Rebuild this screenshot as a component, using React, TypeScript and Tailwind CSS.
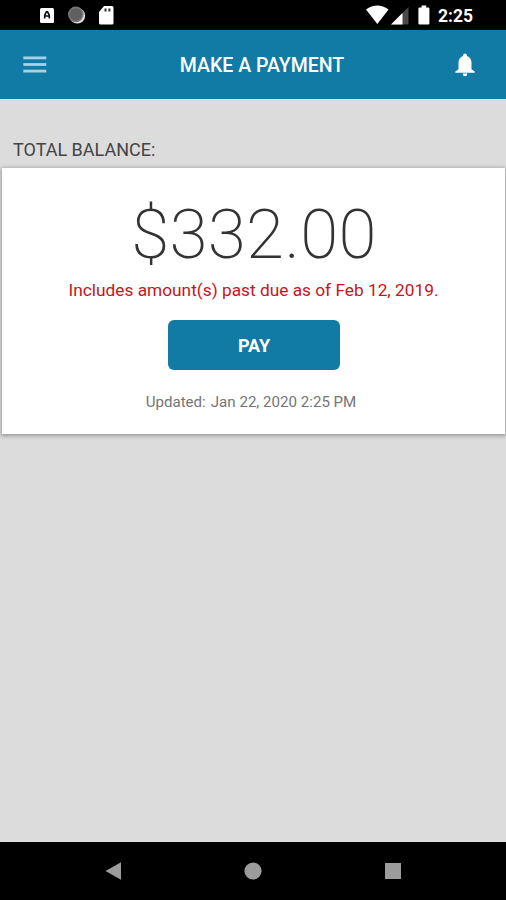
import type { ReactNode } from "react";

const payment = {
  total: "$332.00",
  pastDue: "Includes amount(s) past due as of Feb 12, 2019.",
  updated: "Jan 22, 2020 2:25 PM",
};

function StatusBar() {
  return (
    <div className="flex h-[30px] shrink-0 items-center bg-black text-white">
      <svg width="130" height="30" viewBox="0 0 130 30">
        <rect x="40" y="8" width="14" height="15" rx="1.5" fill="#fff" />
        <path d="M44.7 18.5v-3.2l1.7-3.4h1.2l1.7 3.4v3.2M45.5 16h3" fill="none" stroke="#111" strokeWidth="1.6" />
        <circle cx="77.3" cy="15.8" r="7.8" fill="#e4e4e4" />
        <circle cx="75.8" cy="14.4" r="7.8" fill="#777" />
        <circle cx="75.8" cy="14.4" r="6.2" fill="#606060" />
        <path d="M104 6h8a1.5 1.5 0 0 1 1.5 1.5V23a1.5 1.5 0 0 1-1.5 1.5h-11.5a1.5 1.5 0 0 1-1.5-1.5V12z" fill="#fff" />
        <path d="M104.5 8.5h2v3h-2zM108.4 8.5h2v3h-2z" fill="#333" />
      </svg>
      <svg className="ml-auto" width="70" height="30" viewBox="0 0 70 30">
        <path d="M0 9.5Q11.3 1.5 22.6 9.5L11.3 24z" fill="#fff" />
        <path d="M42.5 7v17.5H25z" fill="#4a4a4a" />
        <path d="M36.5 13v11.5H25z" fill="#fff" />
        <path d="M55.6 5.5h4.6v2h2a1.2 1.2 0 0 1 1.2 1.2v14.6a1.2 1.2 0 0 1-1.2 1.2h-8.6a1.2 1.2 0 0 1-1.2-1.2V8.7a1.2 1.2 0 0 1 1.2-1.2h2z" fill="#fff" />
      </svg>
      <span className="mr-[32px] w-[38px] pt-[3px] pl-[2px] text-[17.5px] leading-none font-bold whitespace-nowrap">2:25</span>
    </div>
  );
}

function IconButton({ label, children }: { label: string; children: ReactNode }) {
  return (
    <button type="button" aria-label={label} className="flex h-full w-[24px] items-center justify-center">
      {children}
    </button>
  );
}

function Header() {
  return (
    <header className="flex h-[69px] shrink-0 items-center justify-between bg-[#117aa5] pr-[29px] pl-[23px] text-white">
      <IconButton label="Menu">
        <svg width="24" height="20" viewBox="0 0 24 20" fill="#a9d2e4">
          <rect x="0.3" y="1.5" width="23" height="2.8" />
          <rect x="0.3" y="8.1" width="23" height="2.8" />
          <rect x="0.3" y="14.7" width="23" height="2.8" />
        </svg>
      </IconButton>
      <h1 className="pt-[3px] pl-[24px] text-[19.5px] leading-none font-medium">MAKE A PAYMENT</h1>
      <IconButton label="Notifications">
        <svg width="24" height="26" viewBox="0 0 24 26" fill="#fff">
          <path d="M12 1.5a1.9 1.9 0 0 1 1.9 1.9v.6c3 .9 4.6 3.5 4.6 6.8v6.4l3.2 2.3v1.2H2.3v-1.2l3.2-2.3v-6.4c0-3.3 1.6-5.9 4.6-6.8v-.6A1.9 1.9 0 0 1 12 1.5zM9.8 21.5h4.4v.6a2.2 2.2 0 0 1-4.4 0z" />
        </svg>
      </IconButton>
    </header>
  );
}

function BalanceCard() {
  return (
    <section className="mr-px ml-[2px] flex h-[266px] flex-col items-center bg-white pl-px shadow-[0_1px_4px_1px_rgba(0,0,0,0.3)]">
      <div className="mt-[32px] text-[69px] leading-[70px] font-extralight tracking-[0.3px] text-[#333]">{payment.total}</div>
      <p className="mt-[10px] pr-px text-[17.3px] leading-[20px] text-[#c8141a]">{payment.pastDue}</p>
      <button type="button" className="mt-[20px] h-[50px] w-[172px] rounded-[6px] bg-[#117aa5] text-[18px] font-bold text-white">
        PAY
      </button>
      <p className="mt-[22px] flex gap-[5px] pr-[6px] text-[15.1px] leading-[20px] text-[#757575]">
        <span>Updated:</span>
        <span>{payment.updated}</span>
      </p>
    </section>
  );
}

function NavBar() {
  return (
    <nav className="flex h-[58px] shrink-0 items-center justify-between bg-black px-[104px]">
      <svg width="18" height="18" viewBox="0 0 18 18" fill="#9c9c9c">
        <path d="M1.5 9 17 .3v17.4z" />
      </svg>
      <svg width="18" height="18" viewBox="0 0 18 18" fill="#9c9c9c">
        <circle cx="9" cy="9" r="8.6" />
      </svg>
      <svg width="18" height="18" viewBox="0 0 18 18" fill="#9c9c9c">
        <rect x="1" y="1" width="16" height="16" />
      </svg>
    </nav>
  );
}

export default function App() {
  return (
    <div className="flex h-[900px] w-[506px] flex-col overflow-hidden bg-[#dcdcdc] font-['Roboto',sans-serif]">
      <StatusBar />
      <Header />
      <main className="flex-1">
        <h2 className="pt-[41px] pb-[8px] pl-[13px] text-[18px] leading-[20px] text-[#444]">TOTAL BALANCE:</h2>
        <BalanceCard />
      </main>
      <NavBar />
    </div>
  );
}
